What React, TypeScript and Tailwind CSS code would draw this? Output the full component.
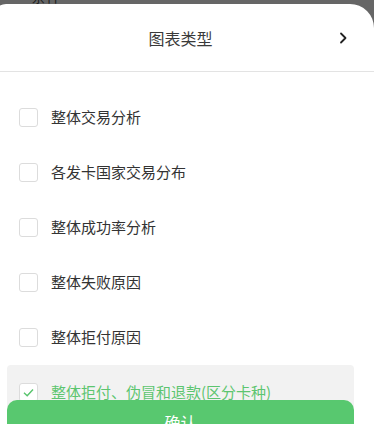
import React from "react";

const items = [
  "整体交易分析",
  "各发卡国家交易分布",
  "整体成功率分析",
  "整体失败原因",
  "整体拒付原因",
  "整体拒付、伪冒和退款(区分卡种)",
];

export default function App() {
  const font = { fontFamily: '"Noto Sans CJK SC", "Noto Sans", sans-serif' };
  return (
    <div className="relative w-[374px] h-[424px] overflow-hidden bg-[#666666]" style={font}>
      <div className="absolute left-[31px] top-[-12px] text-[15px] text-[#222] leading-none">条件</div>
      <div className="relative mt-[4px] ml-[-6px] w-[380px] h-[420px] bg-white rounded-tl-[12px] rounded-tr-[24px] overflow-hidden">
        <div className="relative h-[68px] flex items-center justify-center pr-[13px] border-b border-[#e3e3e3] ml-[6px] w-[374px]">
          <span className="text-[16px] text-[#3a3a3a]">图表类型</span>
          <svg className="absolute left-[338px] top-[27px]" width="10" height="14" viewBox="0 0 10 14">
            <path d="M3 2.5 L7.5 7 L3 11.5" fill="none" stroke="#222" strokeWidth="1.8" strokeLinecap="round" strokeLinejoin="round" />
          </svg>
        </div>
        <div className="ml-[6px] w-[374px] pt-[18px] flex flex-col">
          {items.map((t, i) => {
            const sel = i === items.length - 1;
            return (
              <div
                key={t}
                className={`mx-[7px] w-[347px] h-[55px] px-[12px] flex items-center gap-[13px] rounded-[4px] ${sel ? "bg-[#f2f2f2]" : ""}`}
              >
                <div className="w-[19px] h-[19px] rounded-[3px] border border-[#dcdcdc] bg-white flex items-center justify-center shrink-0">
                  {sel && (
                    <svg width="13" height="13" viewBox="0 0 13 13">
                      <path d="M2 6.8 L5.2 9.8 L11 3.5" fill="none" stroke="#58c46d" strokeWidth="1.4" />
                    </svg>
                  )}
                </div>
                <span className={`text-[15px] ${sel ? "text-[#5cc56f]" : "text-[#333]"}`}>{t}</span>
              </div>
            );
          })}
        </div>
      </div>
      <div className="absolute left-[7px] top-[400px] w-[347px] h-[44px] rounded-[10px] bg-[#58c86f] flex items-center justify-center">
        <span className="text-white text-[16px]">确认</span>
      </div>
    </div>
  );
}
